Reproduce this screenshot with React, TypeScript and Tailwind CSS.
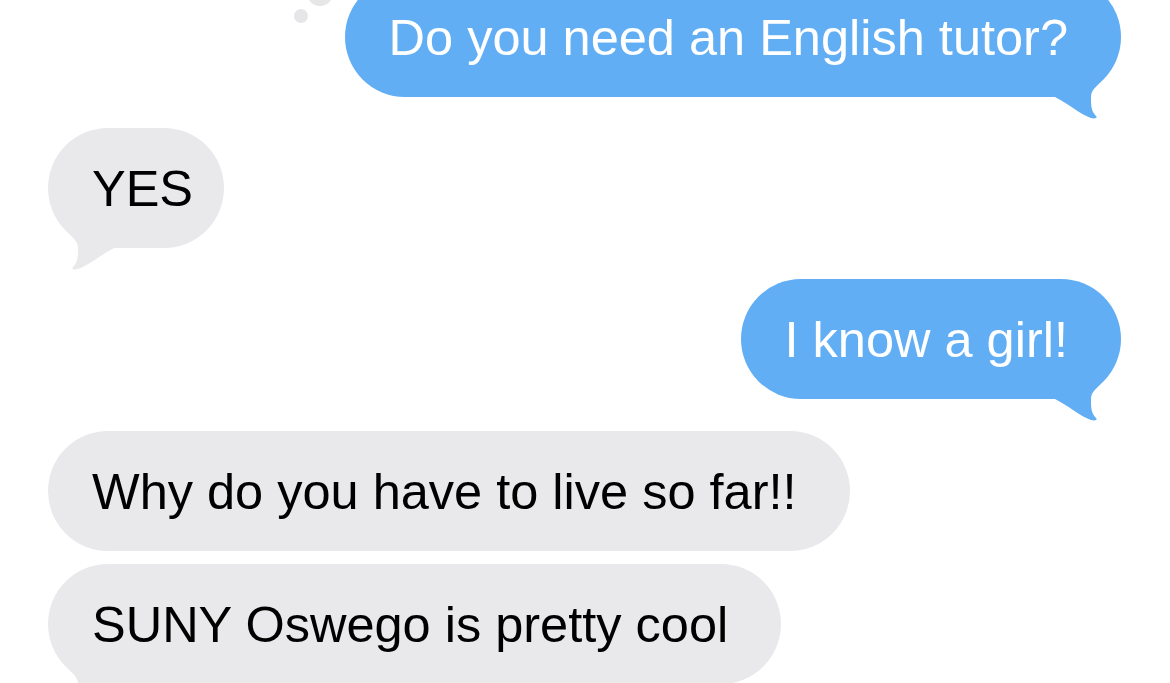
import React from "react";

type Side = "in" | "out";

// iMessage-style hook at the bottom corner of a bubble
function Tail({ side }: { side: Side }) {
  const isOut = side === "out";
  return (
    <svg
      width="80"
      height="44"
      viewBox="-80 -20 80 44"
      className={
        isOut
          ? "absolute right-0 bottom-[-24px] fill-[#61aef5]"
          : "absolute left-0 bottom-[-24px] -scale-x-100 fill-[#e9e9eb]"
      }
    >
      <path d="M -76 -17 L -19 -17 C -23 -11 -30 -8 -30 0 C -30 8 -30 14 -25 19 C -23 21 -26 22 -30 21 C -41 17 -51 8 -66 0 L -76 0 Z" />
    </svg>
  );
}

function Bubble({
  side,
  text,
  tail,
  width,
  children,
}: {
  side: Side;
  text: string;
  tail?: boolean;
  width?: string;
  children?: React.ReactNode;
}) {
  const isOut = side === "out";
  const base = isOut
    ? "relative flex h-[120px] items-center rounded-full bg-[#61aef5] pl-[44px] pr-[53px] pt-[3px] text-white"
    : "relative flex h-[120px] items-center rounded-full bg-[#e9e9eb] pl-[44px] pr-[53px] pt-[3px] text-black";
  return (
    <div className={isOut ? "flex justify-end" : "flex justify-start"}>
      <div className={width ? `${base} ${width}` : base}>
        {tail && <Tail side={side} />}
        {children}
        <span className="relative whitespace-nowrap text-[50.5px] leading-none">
          {text}
        </span>
      </div>
    </div>
  );
}

export default function App() {
  return (
    <div className="h-[683px] overflow-hidden bg-white font-['Liberation_Sans',Arial,sans-serif]">
      <div className="mt-[-23px] flex flex-col pl-[48px] pr-[49px]">
        <Bubble side="out" text="Do you need an English tutor?" tail>
          {/* tapback reaction tail dots */}
          <span className="absolute left-[-38px] top-[3px] h-[26px] w-[26px] rounded-full bg-[#e6e6e8]" />
          <span className="absolute left-[-51px] top-[32px] h-[14px] w-[14px] rounded-full bg-[#e6e6e8]" />
        </Bubble>
        <div className="mt-[31px]">
          <Bubble side="in" text="YES" tail width="w-[176px] pr-[30px]" />
        </div>
        <div className="mt-[31px]">
          <Bubble side="out" text="I know a girl!" tail />
        </div>
        <div className="mt-[32px]">
          <Bubble side="in" text="Why do you have to live so far!!" />
        </div>
        <div className="mt-[13px]">
          <Bubble side="in" text="SUNY Oswego is pretty cool" tail />
        </div>
      </div>
    </div>
  );
}
